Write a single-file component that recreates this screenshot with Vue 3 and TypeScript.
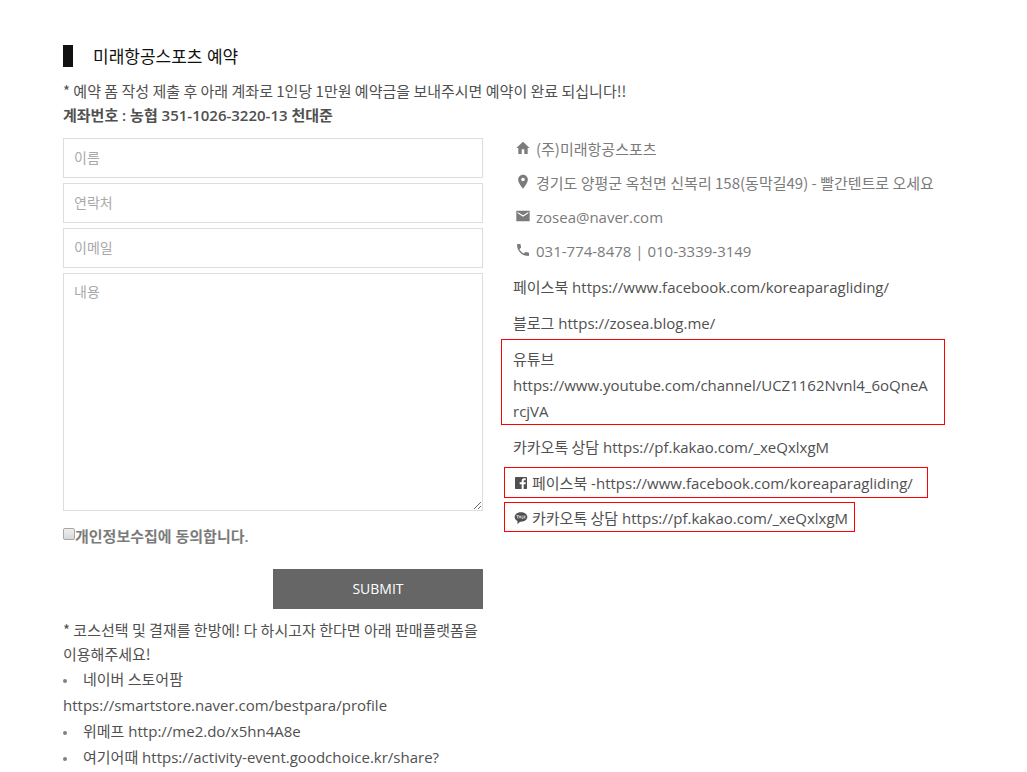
<script setup lang="ts">
import { ref } from 'vue'

interface ContactLine {
  icon: string
  text: string
  korean?: boolean
}
interface SocialLink {
  label: string
  url: string
  icon?: 'facebook' | 'talk'
  prefix?: string
  frame?: string
}

const name = ref('')
const phone = ref('')
const email = ref('')
const message = ref('')
const agreed = ref(false)

const contacts: ContactLine[] = [
  { icon: 'M10 21v-7h4v7h5v-9h3L12 2.500 2 12h3v9z', text: '(주)미래항공스포츠', korean: true },
  {
    icon: 'M12 1C8 1 4.700 4.200 4.700 8.300 4.700 13.800 12 22 12 22s7.300-8.200 7.300-13.700C19.300 4.200 16 1 12 1zm0 10a2.700 2.700 0 1 1 0-5.400 2.700 2.700 0 0 1 0 5.400z',
    text: '경기도 양평군 옥천면 신복리 158(동막길49) - 빨간텐트로 오세요',
    korean: true,
  },
  { icon: 'M2 4h20v16H2zM20 8V6l-8 5-8-5v2l8 5z', text: 'zosea@naver.com' },
  {
    icon: 'M6.600 10.800c1.400 2.800 3.800 5.100 6.600 6.600l2.200-2.200c.3-.3.7-.4 1-.2 1.100.4 2.300.6 3.600.6.600 0 1 .4 1 1V20c0 .6-.4 1-1 1C10.600 21 3 13.400 3 4c0-.6.4-1 1-1h3.500c.6 0 1 .4 1 1 0 1.300.2 2.500.6 3.600.1.300 0 .7-.2 1z',
    text: '031-774-8478 | 010-3339-3149',
  },
]

const links: SocialLink[] = [
  { label: '페이스북', url: 'https://www.facebook.com/koreaparagliding/' },
  { label: '블로그', url: 'https://zosea.blog.me/' },
  { label: '유튜브', url: 'https://www.youtube.com/channel/UCZ1162Nvnl4_6oQneArcjVA', frame: 'wide' },
  { label: '카카오톡 상담', url: 'https://pf.kakao.com/_xeQxlxgM' },
  { label: '페이스북', prefix: '-', url: 'https://www.facebook.com/koreaparagliding/', icon: 'facebook', frame: 'snug roomy' },
  { label: '카카오톡 상담', url: 'https://pf.kakao.com/_xeQxlxgM', icon: 'talk', frame: 'snug' },
]

const shops: SocialLink[] = [
  { label: '네이버 스토어팜', url: 'https://smartstore.naver.com/bestpara/profile' },
  { label: '위메프', url: 'http://me2.do/x5hn4A8e' },
  { label: '여기어때', url: 'https://activity-event.goodchoice.kr/share?' },
]
</script>

<template>
  <main class="page">
    <h1 class="title">미래항공스포츠 예약</h1>
    <p class="note">* 예약 폼 작성 제출 후 아래 계좌로 1인당 1만원 예약금을 보내주시면 예약이 완료 되십니다!!</p>
    <p class="account">계좌번호 : 농협 351-1026-3220-13 천대준</p>

    <div class="columns">
      <section>
        <form class="form" @submit.prevent>
          <input v-model="name" class="field" type="text" placeholder="이름" aria-label="이름" />
          <input v-model="phone" class="field" type="tel" placeholder="연락처" aria-label="연락처" />
          <input v-model="email" class="field" type="email" placeholder="이메일" aria-label="이메일" />
          <textarea v-model="message" class="field message" placeholder="내용" aria-label="내용"></textarea>
          <div class="agree">
            <input id="agree" v-model="agreed" class="check" type="checkbox" />
            <label for="agree">개인정보수집에 동의합니다.</label>
          </div>
          <button class="submit" type="submit">SUBMIT</button>
        </form>
        <p class="note">* 코스선택 및 결재를 한방에! 다 하시고자 한다면 아래 판매플랫폼을 이용해주세요!</p>
        <ul class="shops">
          <li v-for="shop in shops" :key="shop.url">
            <span class="ko">{{ shop.label }}</span>&#32;<a :href="shop.url">{{ shop.url }}</a>
          </li>
        </ul>
      </section>

      <section>
        <ul class="contacts">
          <li v-for="line in contacts" :key="line.text">
            <svg class="icon" viewBox="0 0 24 24" aria-hidden="true"><path :d="line.icon" fill-rule="evenodd" /></svg>
            <span :class="{ ko: line.korean }">{{ line.text }}</span>
          </li>
        </ul>
        <ul class="links">
          <li v-for="(link, i) in links" :key="i" :class="link.frame">
            <svg v-if="link.icon === 'facebook'" class="icon" viewBox="0 0 24 24" aria-hidden="true">
              <path d="M4 3h16a1 1 0 0 1 1 1v16a1 1 0 0 1-1 1h-4v-7h3v-3h-3V9q0-1 1-1h2V5h-3q-3 0-3 4v2h-3v3h3v7H4a1 1 0 0 1-1-1V4a1 1 0 0 1 1-1z" />
            </svg>
            <svg v-else-if="link.icon === 'talk'" class="icon" viewBox="0 0 24 24" aria-hidden="true">
              <path d="M12 3.500c-5 0-9.500 3-9.500 7 0 2.600 1.700 4.600 4.200 5.900L6.500 21l4.300-3.500H12c5 0 9.500-3 9.500-7s-4.500-7-9.500-7z" />
              <path class="mark" d="M5 8.500h4M7 8.500v4M9 12.500l1.500-4 1.500 4M13.500 8.500v4H15M16.500 8v5M19 8.500l-2 2 2 2" />
            </svg>
            <span class="ko">{{ link.label }}</span>&#32;<a :href="link.url">{{ link.prefix }}{{ link.url }}</a>
          </li>
        </ul>
      </section>
    </div>
  </main>
</template>

<style>
body {
  margin: 0;
  background: #fff;
}
</style>

<style scoped>
.page {
  padding: 45px 94px 0 63px;
  font-family: "Open Sans", "Noto Sans CJK KR", sans-serif;
  font-size: 15px;
  line-height: 24px;
  color: #505050;
}
.title {
  height: 22px;
  margin: 0 0 12px;
  padding-left: 20px;
  border-left: 10px solid #111;
  font-size: 17px;
  font-weight: 400;
  line-height: 24px;
  color: #111;
}
.note,
.account {
  margin: 0;
  word-break: keep-all;
}
.note {
  font-family: "Noto Sans CJK KR", sans-serif;
}
.account {
  font-weight: 600;
}
.columns {
  display: grid;
  grid-template-columns: repeat(2, minmax(0, 1fr));
  gap: 30px;
  margin-top: 11px;
}
.form {
  display: flex;
  flex-direction: column;
  gap: 5px;
  margin-bottom: 9px;
}
.field {
  box-sizing: border-box;
  width: 100%;
  height: 40px;
  margin: 0;
  padding: 0 10px 2px;
  border: 1px solid #ddd;
  border-radius: 0;
  background: #fff;
  font: inherit;
  font-size: 14px;
  color: #505050;
}
.field::placeholder {
  color: #a9a9a9;
}
.message {
  height: 238px;
  padding: 6px 10px;
  resize: vertical;
}
.agree {
  display: flex;
  align-items: center;
  margin: 8px 0 16px;
  font-weight: 600;
  color: #7b7b7b;
}
.check {
  appearance: none;
  box-sizing: border-box;
  width: 12px;
  height: 12px;
  margin: 0 0 4px;
  border: 1px solid #a6a6a6;
  border-radius: 2px;
  background: linear-gradient(#eee, #d9d9d9);
}
.check:checked {
  background: #666;
}
.submit {
  align-self: flex-end;
  width: 50%;
  height: 40px;
  padding: 0;
  border: 0;
  background: #666;
  font: inherit;
  font-size: 14px;
  color: #fff;
}
ul {
  margin: 0;
  padding: 0;
  list-style: none;
}
a {
  color: inherit;
  text-decoration: none;
  overflow-wrap: anywhere;
}
.shops,
.links {
  line-height: 26px;
}
.ko {
  font-family: "Noto Sans CJK KR", sans-serif;
  line-height: 16px;
  white-space: nowrap;
}
.shops li::before {
  content: "";
  display: inline-block;
  width: 4px;
  height: 4px;
  margin-right: 16px;
  border-radius: 50%;
  background: #808080;
  vertical-align: 2px;
}
.contacts {
  margin-top: -1px;
}
.contacts li {
  display: flex;
  align-items: center;
  gap: 5px;
  height: 24px;
  margin-bottom: 10px;
  padding-left: 2px;
  color: #7b7b7b;
}
.contacts li:last-child {
  margin-bottom: 11px;
}
.icon {
  flex: none;
  width: 16px;
  height: 16px;
  fill: currentColor;
}
.contacts .icon {
  margin-bottom: 2px;
}
.links .icon {
  margin-right: 3px;
  vertical-align: -2px;
}
.mark {
  fill: none;
  stroke: #fff;
  stroke-width: 1;
}
.links li {
  margin-bottom: 10px;
}
.links .wide {
  margin: -7px -12px 9px;
  padding: 6px 16px 0 11px;
  border: 1px solid #f00;
}
.links .snug {
  width: fit-content;
  margin: -3px 0 7px -9px;
  padding: 2px 6px 0 8px;
  border: 1px solid #f00;
}
.links .roomy {
  padding-right: 14px;
  padding-bottom: 1px;
}
</style>
